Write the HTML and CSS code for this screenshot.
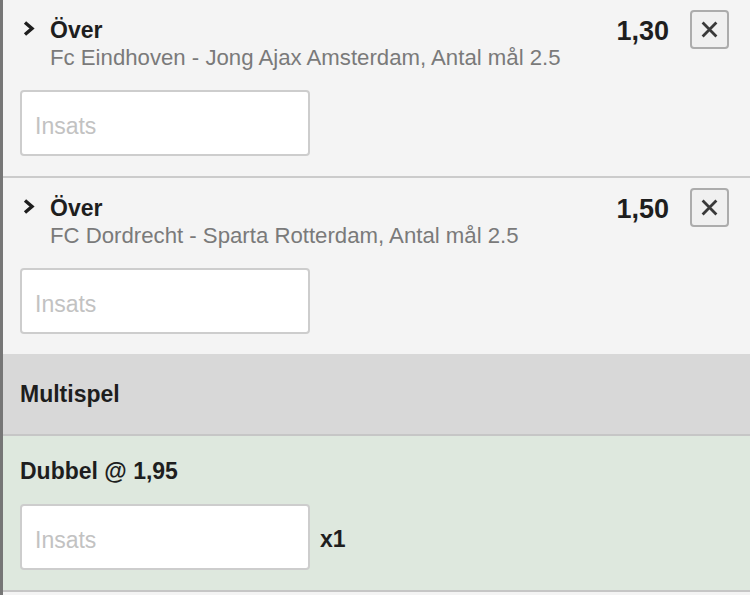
FILE: index.html
```html
<!DOCTYPE html>
<html lang="sv">
<head>
<meta charset="UTF-8">
<meta name="viewport" content="width=device-width, initial-scale=1.0">
<title>Spelkupong</title>
<link rel="stylesheet" href="styles.css">
</head>
<body>

<div class="slip">
    <div class="bet">
        <div class="bet-head">
            <svg class="chev" width="12" height="17" viewBox="0 0 12 17"><polyline points="2,2.5 9,8.5 2,14.5" fill="none" stroke="#1e1e1e" stroke-width="3.4"/></svg>
            <div class="info">
                <div class="title">Över</div>
                <div class="match">Fc Eindhoven - Jong Ajax Amsterdam, Antal mål 2.5</div>
            </div>
            <div class="odds">1,30</div>
            <button class="remove"><svg width="17" height="17" viewBox="0 0 16 16"><path d="M1.5 1.5L14.5 14.5M14.5 1.5L1.5 14.5" stroke="#3a3a3a" stroke-width="2.6"/></svg></button>
        </div>
        <input type="text" class="stake" placeholder="Insats">
    </div>

    <div class="bet last">
        <div class="bet-head">
            <svg class="chev" width="12" height="17" viewBox="0 0 12 17"><polyline points="2,2.5 9,8.5 2,14.5" fill="none" stroke="#1e1e1e" stroke-width="3.4"/></svg>
            <div class="info">
                <div class="title">Över</div>
                <div class="match">FC Dordrecht - Sparta Rotterdam, Antal mål 2.5</div>
            </div>
            <div class="odds">1,50</div>
            <button class="remove"><svg width="17" height="17" viewBox="0 0 16 16"><path d="M1.5 1.5L14.5 14.5M14.5 1.5L1.5 14.5" stroke="#3a3a3a" stroke-width="2.6"/></svg></button>
        </div>
        <input type="text" class="stake" placeholder="Insats">
    </div>

    <div class="multi-head">Multispel</div>

    <div class="multi">
        <div class="title">Dubbel @ 1,95</div>
        <div class="multi-row">
            <input type="text" class="stake" placeholder="Insats">
            <span class="count">x1</span>
        </div>
    </div>
</div>

</body>
</html>
```

FILE: styles.css
```css
body {
    margin: 0;
    padding: 0;
    font-family: "Liberation Sans", Arial, sans-serif;
    background-color: #f4f4f4;
    color: #222;
}

.slip {
    min-height: 595px;
    border-left: 3px solid #999;
    border-image: linear-gradient(to right, #767676, #c4c4c4) 1;
    background-color: #f4f4f4;
}

.bet {
    padding: 10px 21px 20px 17px;
    border-bottom: 2px solid #cbcbcb;
}

.bet.last {
    border-bottom: none;
}

.bet-head {
    display: flex;
    align-items: flex-start;
}

.chev {
    margin-top: 10px;
    margin-left: 3px;
    width: 12px;
    height: 17px;
}

.info {
    flex: 1;
    padding-top: 7px;
    padding-left: 15px;
}

.title {
    font-size: 23px;
    font-weight: bold;
    line-height: 26px;
    color: #1e1e1e;
}

.match {
    margin-top: 2px;
    font-size: 22.2px;
    line-height: 26px;
    color: #7a7a7a;
}

.odds {
    padding-top: 6px;
    font-size: 27px;
    line-height: 30px;
    font-weight: bold;
    color: #1e1e1e;
    margin-right: 21px;
}

.remove {
    width: 39px;
    height: 39px;
    padding: 0;
    border: 2px solid #acacac;
    border-radius: 4px;
    background-color: #f0f0f0;
    display: flex;
    align-items: center;
    justify-content: center;
}

.stake {
    display: block;
    box-sizing: border-box;
    width: 290px;
    height: 66px;
    margin-top: 19px;
    padding: 6px 13px 0;
    border: 2px solid #cdcdcd;
    border-radius: 4px;
    background-color: #fff;
    font-family: "Liberation Sans", Arial, sans-serif;
    font-size: 23px;
}

.stake::placeholder {
    color: #c2c2c2;
}

.multi-head {
    height: 80px;
    display: flex;
    align-items: center;
    padding-left: 17px;
    background-color: #d8d8d8;
    border-bottom: 2px solid #c6c6c6;
    font-size: 23px;
    font-weight: bold;
    color: #1e1e1e;
}

.multi {
    background-color: #dee8de;
    padding: 22px 17px 20px;
    border-bottom: 2px solid #c6c6c6;
}

.multi-row {
    display: flex;
    align-items: center;
    margin-top: 20px;
}

.multi-row .stake {
    margin-top: 0;
}

.count {
    margin-left: 10px;
    padding-top: 5px;
    font-size: 23px;
    font-weight: bold;
    color: #1e1e1e;
}
```
